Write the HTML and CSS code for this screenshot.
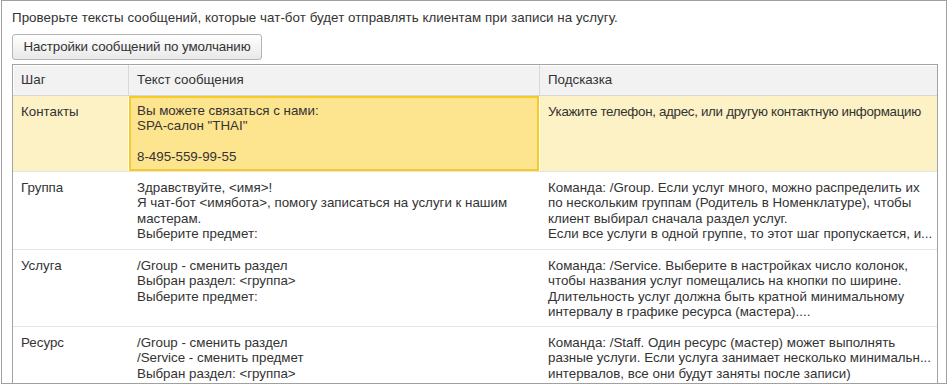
FILE: index.html
```html
<!DOCTYPE html>
<html lang="ru">
<head>
    <meta charset="UTF-8">
    <title>Тексты сообщений чат-бота</title>
    <link rel="stylesheet" href="styles.css">
</head>
<body>

<div class="form">
    <p class="intro">Проверьте тексты сообщений, которые чат-бот будет отправлять клиентам при записи на услугу.</p>

    <button class="btn" type="button">Настройки сообщений по умолчанию</button>

    <div class="grid">
        <div class="row head">
            <div class="cell">Шаг</div>
            <div class="cell">Текст сообщения</div>
            <div class="cell">Подсказка</div>
        </div>

        <div class="row current r1">
            <div class="cell">Контакты</div>
            <div class="cell selected">Вы можете связаться с нами:<br>SPA-салон "THAI"<br><br>8-495-559-99-55</div>
            <div class="cell tight">Укажите телефон, адрес, или другую контактную информацию</div>
        </div>

        <div class="row r2">
            <div class="cell">Группа</div>
            <div class="cell">Здравствуйте, &lt;имя&gt;!<br>Я чат-бот &lt;имябота&gt;, помогу записаться на услуги к нашим<br>мастерам.<br>Выберите предмет:</div>
            <div class="cell">Команда: /Group. Если услуг много, можно распределить их<br>по нескольким группам (Родитель в Номенклатуре), чтобы<br>клиент выбирал сначала раздел услуг.<br>Если все услуги в одной группе, то этот шаг пропускается, и...</div>
        </div>

        <div class="row r3">
            <div class="cell">Услуга</div>
            <div class="cell">/Group - сменить раздел<br>Выбран раздел: &lt;группа&gt;<br>Выберите предмет:</div>
            <div class="cell">Команда: /Service. Выберите в настройках число колонок,<br>чтобы названия услуг помещались на кнопки по ширине.<br>Длительность услуг должна быть кратной минимальному<br>интервалу в графике ресурса (мастера)....</div>
        </div>

        <div class="row r4">
            <div class="cell">Ресурс</div>
            <div class="cell">/Group - сменить раздел<br>/Service - сменить предмет<br>Выбран раздел: &lt;группа&gt;</div>
            <div class="cell">Команда: /Staff. Один ресурс (мастер) может выполнять<br>разные услуги. Если услуга занимает несколько минимальн...<br>интервалов, все они будут заняты после записи)</div>
        </div>
    </div>
</div>

</body>
</html>
```

FILE: styles.css
```css
* { margin: 0; padding: 0; box-sizing: border-box; }
body {
    font-family: Arial, "Liberation Sans", sans-serif;
    font-size: 13.33px;
    line-height: 15.33px;
    color: #333;
    background: #fff;
}
.form {
    width: 946px; height: 384px; margin-left: 1px;
    border: 1px solid #a0a0a0;
    padding: 9px 8px 0 10px;
    overflow: hidden;
}
.intro { white-space: nowrap; letter-spacing: 0.05px; }
.btn {
    display: block; width: 250px; height: 26px; margin-top: 8.67px;
    border: 1px solid #b4b4b4; border-radius: 3px;
    background: linear-gradient(180deg, #ffffff 0%, #f4f4f4 50%, #e8e8e8 100%);
    font: inherit; color: inherit; text-align: center; cursor: pointer;
    letter-spacing: -0.1px;
}
.grid { width: 926px; margin-top: 4px; border: 1px solid #a3a3a3; }
.row {
    display: grid;
    grid-template-columns: 115px 411px 398px;
    border-bottom: 1px solid #e4e4e4;
}
.cell { padding: 8px 8px 0; white-space: nowrap; overflow: hidden; }
.cell + .cell { border-left: 1px solid transparent; }
.tight { letter-spacing: -0.3px; }
.head {
    height: 31px; background: #f2f2f2;
    border-bottom-color: #d6d6d6;
    box-shadow: inset 1px 1px #fff;
}
.head .cell { display: flex; align-items: center; padding: 0 8px; }
.head .cell + .cell { border-left-color: #d8d8d8; }
.current { background: #fdf2c6; }
.current .cell + .cell { border-left-color: #fff; }
.selected {
    background: #fde48f;
    box-shadow: inset 0 0 0 2px #f8ca25;
    padding-top: 7px;
}
.r1 { height: 76px; }
.r2 { height: 78px; }
.r3 { height: 77px; }
.r4 { height: 77px; }
```
